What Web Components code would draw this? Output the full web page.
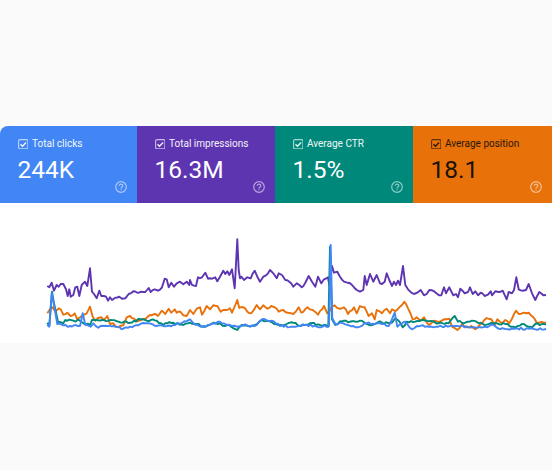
<!DOCTYPE html>
<html>
<head>
<meta charset="utf-8">
<style>
	html, body { margin: 0; background: #fafafa; }
	body { font-family: Roboto, "Liberation Sans", sans-serif; }
</style>
</head>
<body>
<gsc-report>
	<gsc-metric label="Total clicks" value="244K" color="#4285f4"></gsc-metric>
	<gsc-metric label="Total impressions" value="16.3M" color="#5e35b1"></gsc-metric>
	<gsc-metric label="Average CTR" value="1.5%" color="#00897b"></gsc-metric>
	<gsc-metric label="Average position" value="18.1" color="#e8710a" ink="#1a1208"></gsc-metric>
	<gsc-chart slot="chart"></gsc-chart>
</gsc-report>
<script>
class GscReport extends HTMLElement {
	constructor () {
		super()
		this.attachShadow({ mode: 'open' })
		this.shadowRoot.innerHTML = `
			<style>
				:host { display: block; width: 552px; height: 470px; padding-top: 126px; box-sizing: border-box; }
				.cards {
					display: grid;
					grid-template-columns: 137px 138px 138px 139px;
					height: 77px;
					border-radius: 8px 0 0 0;
					overflow: hidden;
				}
				.chart { display: block; height: 140px; background: #fff; }
			</style>
			<div class="cards"><slot></slot></div>
			<div class="chart"><slot name="chart"></slot></div>
		`
	}
}

class GscMetric extends HTMLElement {
	constructor () {
		super()
		this.attachShadow({ mode: 'open' })
	}

	connectedCallback () {
		const ink = this.getAttribute('ink') || '#fff'
		this.shadowRoot.innerHTML = `
			<style>
				:host {
					display: flex;
					flex-direction: column;
					box-sizing: border-box;
					padding: 11px 10px 0 17.5px;
					color: ${ink};
					background: ${this.getAttribute('color')};
				}
				.head { display: flex; align-items: center; gap: 4px; height: 14px; font-size: 10px; line-height: 14px; white-space: nowrap; opacity: .94; }
				.value { margin-top: 7px; font-size: 24.5px; line-height: 24px; }
				.help { align-self: flex-end; margin-top: -1px; width: 12px; height: 12px; opacity: .55; }
				svg { display: block; flex: none; }
			</style>
			<div class="head">
				<svg width="10.5" height="10.5" viewBox="0 0 10.5 10.5" fill="none" stroke="currentColor">
					<rect x=".6" y=".6" width="9.3" height="9.3" rx="1.4" stroke-width="1.1" opacity=".7"/>
					<path d="M2.5 5.3l2 2 3.6-3.8" stroke-width="1.25"/>
				</svg>
				<span>${this.getAttribute('label')}</span>
			</div>
			<div class="value">${this.getAttribute('value')}</div>
			<svg class="help" viewBox="0 0 12 12" fill="none" stroke="#fff">
				<circle cx="6" cy="6" r="5.3" stroke-width="1.2"/>
				<path d="M4.2 4.8c0-1 .8-1.7 1.8-1.7s1.8.7 1.8 1.6c0 1.3-1.8 1.4-1.8 2.8" stroke-width="1.2"/>
				<path d="M6 8.2v1.1" stroke-width="1.2"/>
			</svg>
		`
	}
}

// Points are read off 3x crops of the chart: [offset x, list of x,y in crop pixels].
const SERIES = {
	'#5e35b1': [
		[30, '52,168 58,172 65,158 72,182 80,165 86,170 92,162 100,162 108,178 113,198 118,178 122,200 130,195 136,172 142,170 148,198 155,165 165,155 172,168 180,115 186,185 192,192 200,205 208,182 214,198 222,198 228,200 234,212 240,202 246,210 256,203 268,200 276,206 286,205 296,192 310,184 322,188 334,185 346,186 356,174 362,186 374,178 384,182 396,172 404,146 410,148 416,172 424,158 432,170 440,160 450,155 460,163 470,155 478,165 480,150 486,165 498,168 504,142 516,142 526,128 534,146 540,145'],
		[200, '36,146 46,142 52,154 60,140 70,122 76,132 82,124 88,135 96,118 104,175 112,28 116,120 120,145 124,140 132,150 142,142 152,145 164,122 172,140 180,155 190,140 198,136 210,120 220,130 230,145 236,130 246,135 256,150 268,155 280,170 290,160 305,172 316,158 326,138 336,155 346,170 354,140 364,160 372,148 384,142 388,165 396,108 402,128 412,125 420,140 432,155 442,158 456,165 470,180 480,185 490,180 494,138 500,165 510,132 520,155 530,135 540,160'],
		[372, '30,162 38,155 44,130 52,150 60,168 66,155 72,165 78,152 84,165 93,108 100,165 108,178 118,188 126,192 136,188 146,180 156,196 164,192 172,180 186,184 196,192 208,196 216,172 222,190 232,172 244,196 252,192 258,202 265,176 278,190 288,186 294,172 302,192 310,184 318,196 326,188 338,198 348,194 356,184 360,196 370,184 380,186 392,182 404,208 410,186 420,190 426,180 433,142 440,178 452,182 462,180 470,162 480,190 490,210 502,186 514,196 522,195']
	],
	'#e8710a': [
		[30, '52,250 60,238 68,232 76,245 86,235 92,238 100,254 112,248 122,258 134,250 142,268 150,262 158,256 170,250 180,230 188,260 196,272 204,264 214,262 222,270 232,258 240,282 250,280 258,290 270,288 280,286 290,262 300,258 312,266 322,274 334,270 346,268 360,255 372,252 384,258 396,242 406,252 416,236 424,248 434,238 440,248 452,246 460,256 470,258 480,240 490,252 500,236 510,232 516,254 530,228 540,238'],
		[200, '40,226 52,228 62,245 76,240 90,235 96,248 106,225 112,210 118,234 130,232 142,245 154,250 170,225 180,238 190,226 202,236 214,228 224,232 236,245 250,240 264,248 280,252 296,232 304,248 322,232 338,240 354,254 372,228 382,250 396,230 404,226 418,236 432,232 444,252 462,232 470,250 480,228 494,232 506,258 516,250 524,268 530,240 540,245'],
		[372, '30,250 44,236 54,250 60,238 70,244 84,230 97,215 108,235 122,268 134,262 146,272 156,262 170,285 186,272 200,276 216,268 232,266 240,290 256,300 270,282 284,292 298,288 310,298 330,280 344,264 358,268 368,285 376,268 390,280 400,270 412,280 420,266 432,242 440,252 455,248 470,248 482,260 495,280 510,276 522,278']
	],
	'#00897b': [
		[30, '52,278 58,288 66,185 72,220 84,275 100,280 106,270 130,272 150,272 160,280 180,285 186,270 210,272 240,270 260,274 300,278 330,268 380,272 400,285 412,280 430,278 460,285 480,278 500,282 520,290 540,284'],
		[200, '40,278 60,280 76,288 90,287 112,300 125,285 145,288 165,285 186,270 210,274 235,285 260,282 280,278 300,288 330,280 360,285 385,290 390,50 396,268 406,285 420,274 450,275 480,272 500,282 520,284 540,274'],
		[372, '30,278 60,278 70,265 80,272 92,292 104,275 130,275 160,272 200,280 230,280 248,258 258,275 280,278 300,272 320,280 345,284 370,280 400,282 430,292 450,282 480,292 490,282 522,284']
	],
	'#4285f4': [
		[30, '52,285 58,290 65,190 72,225 82,282 100,286 120,288 150,288 158,250 166,284 182,290 190,280 205,293 222,288 250,288 280,296 300,290 325,286 345,280 370,284 400,288 430,285 480,268 495,284 520,288 540,284'],
		[200, '40,280 60,275 80,285 110,290 130,285 150,290 170,285 186,268 215,272 240,288 280,290 320,284 350,290 387,288 392,45 397,265 406,282 430,280 460,288 480,290 500,280 530,280 540,280'],
		[372, '30,282 50,288 68,248 76,290 100,275 120,298 135,288 170,290 210,290 250,288 300,292 340,290 365,285 380,296 430,296 470,296 522,296']
	]
}

// Small repeatable wobble so long straight stretches read like daily data.
let seed = 7
const wobble = () => {
	seed = (seed * 16807) % 2147483647
	return (seed % 1000) / 1000 - 0.5
}

class GscChart extends HTMLElement {
	constructor () {
		super()
		this.attachShadow({ mode: 'open' })
	}

	connectedCallback () {
		const lines = Object.entries(SERIES).map(([color, parts]) => {
			const points = []
			let last = null
			for (const [offset, text] of parts) {
				for (const pair of text.split(' ')) {
					const [x, y] = pair.split(',').map(Number)
					const px = x / 3 + offset
					// crop y starts at 230 on the page, the chart at 203
					const py = y / 3 + 27
					if (last && px <= last[0]) { continue }
					if (last) {
						const steps = Math.floor((px - last[0]) / 1.8)
						for (let i = 1; i < steps; i++) {
							const t = i / steps
							const mx = last[0] + (px - last[0]) * t
							const my = last[1] + (py - last[1]) * t + wobble() * 2.2
							points.push(`${mx.toFixed(1)},${my.toFixed(1)}`)
						}
					}
					points.push(`${px.toFixed(1)},${py.toFixed(1)}`)
					last = [px, py]
				}
			}
			return `<polyline points="${points.join(' ')}" stroke="${color}"/>`
		})
		this.shadowRoot.innerHTML = `
			<style>
				:host { display: block; height: 140px; }
				svg { display: block; }
				polyline { fill: none; stroke-width: 1.9; stroke-linejoin: round; }
			</style>
			<svg width="552" height="140" viewBox="0 0 552 140">${lines.join('')}</svg>
		`
	}
}

customElements.define('gsc-report', GscReport)
customElements.define('gsc-metric', GscMetric)
customElements.define('gsc-chart', GscChart)
</script>
</body>
</html>
